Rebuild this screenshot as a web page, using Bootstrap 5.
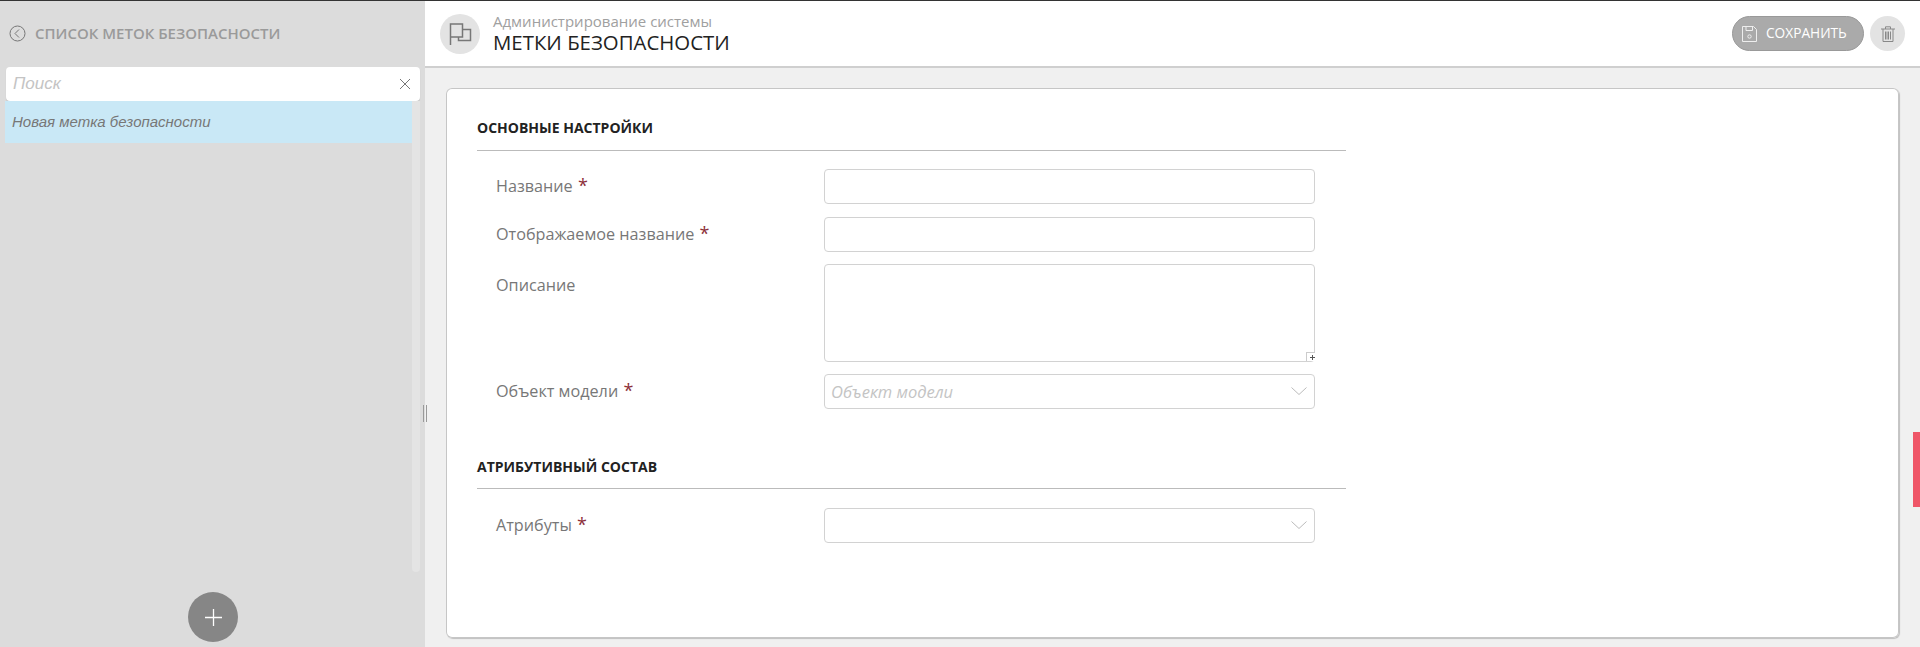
<!DOCTYPE html>
<html lang="ru">
<head>
    <meta charset="UTF-8">
    <meta name="viewport" content="width=device-width, initial-scale=1.0">
    <title>Метки безопасности</title>
    <link href="https://cdn.jsdelivr.net/npm/bootstrap@5.3.0/dist/css/bootstrap.min.css" rel="stylesheet">

    <style>
        html, body {
            height: 100%;
            overflow: hidden;
        }

        body {
            font-family: "Open Sans", sans-serif;
            background: #f0f0f0;
            border-top: 1px solid #333;
        }

        .app-wrap {
            height: 646px;
        }

        /* left panel */
        .side-panel {
            width: 425px;
            background: #dcdcdc;
            padding-left: 5px;
            padding-bottom: 5px;
        }

        .side-title {
            height: 66px;
            padding: 0 0 2px 4px;
            gap: 9px;
            color: #9a9a9a;
            font-size: 15px;
            font-weight: 600;
        }

        .search-box {
            width: 414px;
            height: 34px;
            margin-left: 1px;
            padding: 0 9px 0 7px;
            background: #fff;
            border-radius: 4px;
            box-shadow: 0 1px 1px rgba(0, 0, 0, 0.15);
        }

        .search-input {
            border: 0;
            outline: 0;
            padding: 0;
            width: 100%;
            font-family: "Liberation Sans", sans-serif;
            font-style: italic;
            font-size: 17px;
        }

        .search-input::placeholder {
            color: #c4c4c4;
            opacity: 1;
        }

        .tag-item {
            height: 42px;
            padding-left: 7px;
            background: #c9e8f6;
            color: #777;
            font-family: "Liberation Sans", sans-serif;
            font-style: italic;
            font-size: 15px;
        }

        .list-track {
            width: 8px;
            background: #e4e4e4;
            border-radius: 0 0 4px 4px;
            margin-right: 5px;
        }

        .add-btn {
            width: 50px;
            height: 50px;
            margin: 20px 0 0 183px;
            background: #868686;
            border: 0;
            padding: 0;
        }

        .resize-mark {
            position: absolute;
            left: 423px;
            top: 405px;
            width: 4px;
            height: 17px;
            border-left: 1px solid #999;
            border-right: 1px solid #999;
        }

        /* top bar */
        .top-bar {
            height: 67px;
            background: #fff;
            border-bottom: 2px solid #cfcfcf;
            padding: 0 15px;
        }

        .bar-icon {
            width: 40px;
            height: 40px;
            background: #e3e3e3;
            margin-right: 13px;
        }

        .bar-sub {
            font-size: 15px;
            line-height: 18px;
            color: #a0a0a0;
        }

        .bar-title {
            font-size: 20.4px;
            line-height: 25px;
            color: #222;
        }

        .save-btn {
            height: 35px;
            width: 132px;
            background: #aaa;
            border: 1px solid #999;
            color: #fff;
            font-size: 13.7px;
            gap: 9px;
            padding: 0 0 0 9px;
        }

        .del-btn {
            width: 35px;
            height: 35px;
            margin-left: 6px;
            background: #e3e3e3;
            border: 0;
            padding: 0;
        }

        /* form card */
        .main-zone {
            padding: 20px 21px 8px 21px;
        }

        .form-sheet {
            height: 550px;
            background: #fff;
            border: 0;
            border-radius: 6px;
            box-shadow: inset 0 0 0 1px #c6c6c6, 1px 1px 1px rgba(0, 0, 0, 0.2);
            padding: 0 0 0 31px;
        }

        .sheet-col {
            width: 869px;
        }

        .sec-title {
            height: 63px;
            margin: 0 0 18px;
            padding-top: 29px;
            border-bottom: 1px solid #bbb;
            font-size: 14px;
            line-height: 22px;
            font-weight: 700;
            color: #222;
        }

        .sec-next {
            margin: 17px 0 19px;
            padding-top: 30px;
        }

        .field-row {
            padding-left: 19px;
            margin-bottom: 12px;
        }

        .field-first {
            margin-bottom: 13px;
        }

        .field-label {
            width: 328px;
            margin: 0;
            font-size: 16.2px;
            line-height: 20px;
            color: #777;
            padding-top: 6px;
        }

        .label-low {
            padding-top: 11px;
        }

        .field-label b {
            color: #8c2f39;
            font-size: 18px;
            font-weight: 400;
            margin-left: 1px;
        }

        .field-box {
            width: 491px;
            height: 35px;
            border: 1px solid #d2d2d2;
            border-radius: 4px;
            padding: 0 6px;
            font-size: 16.5px;
            box-shadow: none;
        }

        textarea.field-box {
            height: 98px;
            resize: none;
            display: block;
        }

        .field-box::placeholder {
            color: #c4c4c4;
            font-style: italic;
            opacity: 1;
        }

        .field-wrap {
            width: 491px;
        }

        .arrow-mark {
            position: absolute;
            right: 8px;
            top: 13px;
        }

        .grip-mark {
            position: absolute;
            right: 0;
            bottom: 1px;
            width: 9px;
            height: 9px;
            background: #fff;
            border: 1px solid #ccc;
            border-width: 1px 0 0 1px;
        }

        .grip-mark::before,
        .grip-mark::after {
            content: "";
            position: absolute;
            background: #555;
        }

        .grip-mark::before {
            left: 3px;
            top: 4px;
            width: 5px;
            height: 1px;
        }

        .grip-mark::after {
            left: 5px;
            top: 2px;
            width: 1px;
            height: 5px;
        }

        .red-tab {
            position: absolute;
            right: 0;
            top: 432px;
            width: 7px;
            height: 75px;
            background: #ef5668;
        }
    </style>
</head>
<body>
    <div class="app-wrap d-flex">
        <aside class="side-panel d-flex flex-column flex-shrink-0">
            <div class="side-title d-flex align-items-center">
                <svg width="17" height="17" viewBox="0 0 17 17" fill="none" stroke="#777" stroke-width="1">
                    <circle cx="8.500" cy="8.500" r="7.500"/>
                    <path d="M10 4.500 6 8.500l4 4"/>
                </svg>
                <span>СПИСОК МЕТОК БЕЗОПАСНОСТИ</span>
            </div>
            <div class="search-box d-flex align-items-center">
                <input class="search-input" type="text" placeholder="Поиск">
                <svg class="flex-shrink-0" width="12" height="12" viewBox="0 0 12 12" stroke="#777" stroke-width="1">
                    <path d="M1 1l10 10M11 1 1 11"/>
                </svg>
            </div>
            <div class="d-flex flex-grow-1">
                <div class="flex-grow-1">
                    <div class="tag-item d-flex align-items-center">Новая метка безопасности</div>
                </div>
                <div class="list-track"></div>
            </div>
            <button class="add-btn rounded-circle d-flex align-items-center justify-content-center" type="button">
                <svg width="17" height="17" viewBox="0 0 17 17" stroke="#fff" stroke-width="1.300">
                    <path d="M8.500 0v17M0 8.500h17"/>
                </svg>
            </button>
        </aside>

        <main class="flex-grow-1 d-flex flex-column">
            <header class="top-bar d-flex align-items-center">
                <div class="bar-icon rounded-circle d-flex align-items-center justify-content-center">
                    <svg width="24" height="24" viewBox="0 0 24 24" fill="none" stroke="#777" stroke-width="1.500">
                        <path d="M2.500 23V2h12v13h-12"/>
                        <path d="M14.500 7.500h8v11h-12V15"/>
                    </svg>
                </div>
                <div>
                    <div class="bar-sub">Администрирование системы</div>
                    <div class="bar-title">МЕТКИ БЕЗОПАСНОСТИ</div>
                </div>
                <button class="save-btn btn rounded-pill d-flex align-items-center ms-auto" type="button">
                    <svg width="15" height="16" viewBox="0 0 15 16" fill="none" stroke="#eee" stroke-width="1">
                        <path d="M.500.500h11l3 3v12H.500z"/>
                        <path d="M4 .500v4h6.500v-4"/>
                        <circle cx="7.500" cy="10.500" r="1.700"/>
                    </svg>
                    <span>СОХРАНИТЬ</span>
                </button>
                <button class="del-btn rounded-circle d-flex align-items-center justify-content-center" type="button">
                    <svg width="14" height="16" viewBox="0 0 14 16" fill="none" stroke="#888" stroke-width="1">
                        <path d="M0 3h14M4.500 3V.800h5V3M2 3v12.500h10V3M4.500 5.500v8M6 5.500v8M7.500 5.500v8M9.500 5.500v8"/>
                    </svg>
                </button>
            </header>

            <div class="main-zone flex-grow-1">
                <div class="form-sheet">
                    <div class="sheet-col">
                        <h6 class="sec-title">ОСНОВНЫЕ НАСТРОЙКИ</h6>
                        <div class="field-row field-first d-flex">
                            <label class="field-label">Название <b>*</b></label>
                            <input class="field-box form-control" type="text">
                        </div>
                        <div class="field-row d-flex">
                            <label class="field-label">Отображаемое название <b>*</b></label>
                            <input class="field-box form-control" type="text">
                        </div>
                        <div class="field-row d-flex">
                            <label class="field-label label-low">Описание</label>
                            <div class="field-wrap position-relative">
                                <textarea class="field-box form-control"></textarea>
                                <span class="grip-mark"></span>
                            </div>
                        </div>
                        <div class="field-row d-flex">
                            <label class="field-label">Объект модели <b>*</b></label>
                            <div class="field-wrap position-relative">
                                <input class="field-box form-control" type="text" placeholder="Объект модели">
                                <svg class="arrow-mark" width="16" height="9" viewBox="0 0 16 9" fill="none" stroke="#bbb">
                                    <path d="M.500.500l7.500 7 7.500-7"/>
                                </svg>
                            </div>
                        </div>
                        <h6 class="sec-title sec-next">АТРИБУТИВНЫЙ СОСТАВ</h6>
                        <div class="field-row d-flex">
                            <label class="field-label">Атрибуты <b>*</b></label>
                            <div class="field-wrap position-relative">
                                <input class="field-box form-control" type="text">
                                <svg class="arrow-mark" width="16" height="9" viewBox="0 0 16 9" fill="none" stroke="#bbb">
                                    <path d="M.500.500l7.500 7 7.500-7"/>
                                </svg>
                            </div>
                        </div>
                    </div>
                </div>
            </div>
        </main>
    </div>

    <span class="resize-mark"></span>
    <span class="red-tab"></span>

    <script src="https://cdn.jsdelivr.net/npm/bootstrap@5.3.0/dist/js/bootstrap.bundle.min.js"></script>
</body>
</html>
